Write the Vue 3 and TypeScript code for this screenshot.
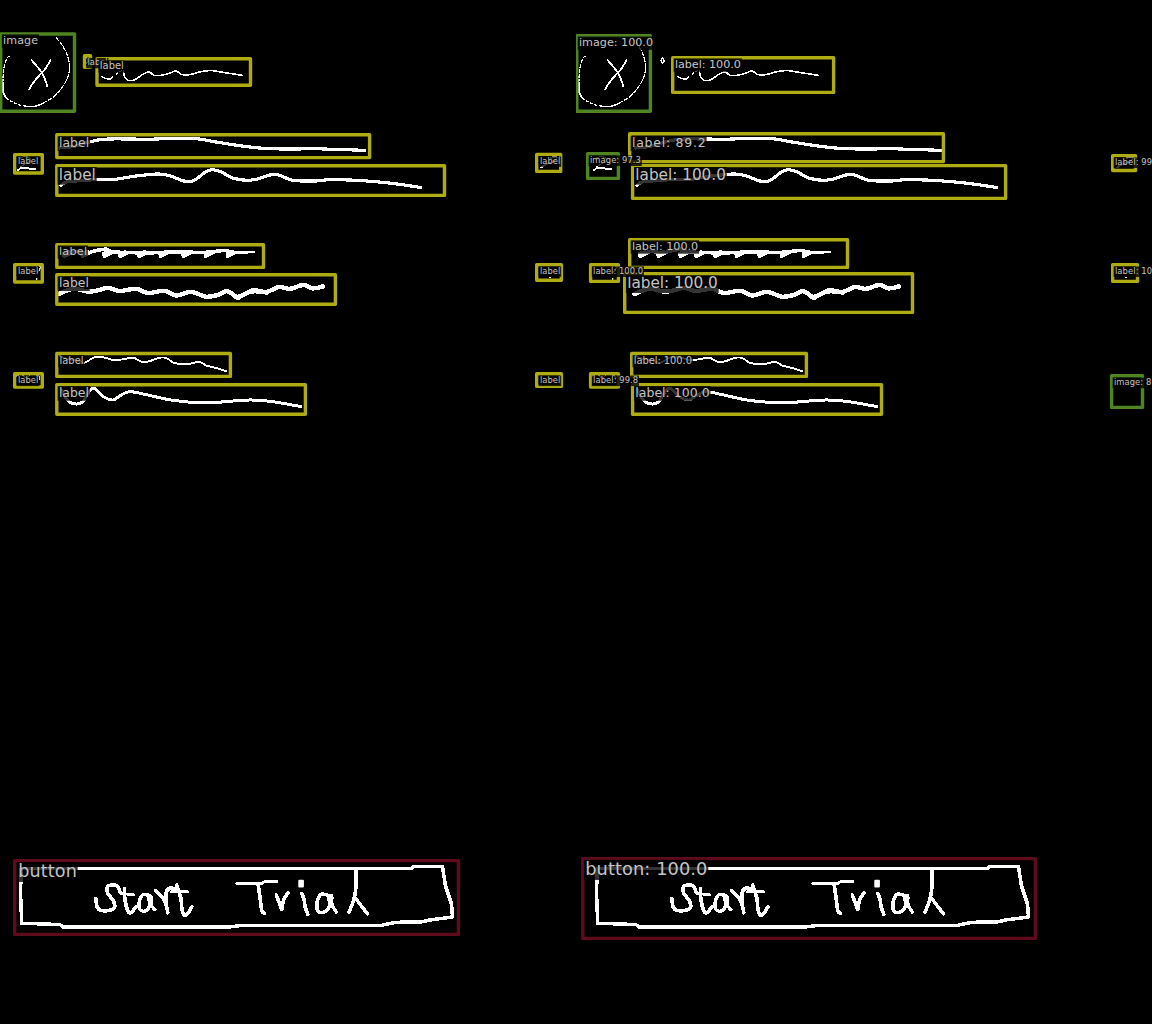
<script setup lang="ts">
type Kind = 'image' | 'label' | 'button'
type Box = [kind: Kind, x1: number, y1: number, x2: number, y2: number]
type Tag = [text: string, x: number, baseline: number, width: number, size: number]
interface Panel { name: string; origin: number; boxes: Box[]; tags: Tag[] }
interface Stroke { pts: string; w: number; straight?: boolean; dash?: string }

const strokes: Stroke[] = [
  { w: 1.1, dash: '5 0.8', pts: '56.3,37.3 61.5,43.5 67.3,54 69.8,63.3 69.3,73.5 65,84 55,96 43.5,103.3' },
  { w: 1.5, pts: '43.5,103.3 37,106 31.7,106.7 26,106.2' },
  { w: 1.1, dash: '3 1.6', pts: '26,106.2 20,105 10,100.5 6,97' },
  { w: 1.9, pts: '6,97 4,93 3.4,83' },
  { w: 1.1, dash: '4 1', pts: '3.4,83 4,70 6.7,60 8.5,56.8 10.5,56.3' },
  { w: 1.8, pts: '32.3,60.3 41.7,71.7 46.3,81.5 47.8,86.5' },
  { w: 1.8, pts: '50.7,60.3 46.5,68 41.5,73.5 33.3,83.3 29.5,89.5' },
  { w: 1.3, pts: '102.3,76.3 106,78.5 111,79 113.3,77' },
  { w: 1, dash: '3 1.5', pts: '116.2,74.5 120.7,71.3 124,70.8' },
  { w: 1.6, pts: '124,70.8 125.3,77.6 130,80.7 136.7,79 143.3,74.3 149.7,71.9 154.3,75.3 161.7,75.3 170,73.3 176.7,71 181.7,74.3 190,74.7 200,72 211.7,70.5 223.3,72.3 242.7,75.3' },
  { w: 1.3, pts: '87,57.5 85.6,60 87,63 88.6,60.5 87,57.5' },
  { w: 3.2, pts: '60,148 74,146.5 88,142.5 100,139.7 115,138.9 150,139.2 176.7,138.3 196.7,138.7 216.7,142 240,145.7 260,148 283,149 317,148.8 333,149.3 365,150.3' },
  { w: 3.2, pts: '61.5,185.5 63,184 66.7,182 98.3,179.5 116.7,179.2 133,176.5 158.3,174 170,175.7 183.3,180.7 191.7,181.7 200,176.7 206.7,171.5 213.3,169.7 221.7,172 233.3,178 246.7,180.3 257,179.2 266.7,176 275,174.3 281.7,176 293,180.3 316.7,181 326.7,179.9 350,180 376.7,181.7 400,184.3 421,187.5' },
  { w: 1.6, straight: true, pts: '18,170.5 21,168 29,168 30,169 35.7,169.2' },
  { w: 1.2, pts: '21,167 27,163 31,160 26,156.5 21,158' },
  { w: 1.8, pts: '541.5,167.5 546,164.5 555,161 557,157 551,158' },
  { w: 3.6, pts: '64,255 75,251.5 88,253 95,250.9 106.7,249.2 112,251.8 150,252.8 178,251.8 204,252.5 226,250.5 232,252.3 246,252.4' },
  { w: 2.2, pts: '240,252.7 255,252.2' },
  { w: 4.4, pts: '59,294 66.7,290.7 75,288.7 88.3,291.5 96.7,290.8 108,287.9 120,291 136.7,288.8 148.3,293 165,290.9 176.7,295.5 191.7,291.9 206.7,296.7 218,295 227.7,291.2 238.3,296.8 253.3,290.3 266.7,292 280,286.9 290,288.9 304,285 313.3,288.4 323.5,286.4' },
  { w: 2, pts: '242,295.5 255,292.5 268,293.8' },
  { w: 2, pts: '230,293 238,299 245,295' },
  { w: 1.9, pts: '60,356 68,359 77,360.5 84,363 88,361.3 93.3,358 99.3,356.8 106.7,358 115,360.3 125,359 134,357.7 141.7,361.7 148.3,361.7 160,357.8 166.7,358 175,363.1 190,363.7 200,362 206.7,365.5 216.7,368 226.7,371.3' },
  { w: 3, pts: '62,390 68.3,400.7 76.7,404 83.3,401.7 88.3,393.3 94.3,388.3 103.3,396.3 113.3,400 121.7,395 130,391.7 146.7,394.7 173.3,400.3 206.7,402.8 250,400 273.3,401.7 301,406.5' },
  { w: 1.2, pts: '17,376 22,374.5 27,378 32,374 39,376 40.5,380' },
  { w: 1.2, pts: '37,266 40,265.5 40.5,269 38,272' },
  { w: 3.5, straight: true, pts: '21.5,868.5 21.1,895 22.2,923.3 45.5,924 60.5,924.7 63.8,927 230,927 240,925.7 380,925.7 396.7,922.3 421.7,922 430,920 453,917 452,904 446,886 443,866.5 413.8,866.7 412.2,868.5 21.5,868.5' },
  { w: 3.6, pts: '96.5,898.5 97.5,906.5 101,910.3 111.7,910 115.3,906.5 113.3,900 108.3,893.3 107.5,887.5 111.7,885 116.7,885.5 119.3,888.5 120.7,892.7' },
  { w: 3.6, pts: '124.9,888.5 125.5,900 128.5,911.5 131,913 136.3,907' },
  { w: 2.9, pts: '120.7,893.3 134,894.8' },
  { w: 3.4, pts: '148.8,895 143.3,894.7 139.8,901.7 140.5,909.5 146.3,910.7 150.3,905 149.8,895.5 151.7,905 155.5,909.8' },
  { w: 3.6, pts: '156.3,890.5 159.8,894 164,898.5 167,906 168.3,912.8' },
  { w: 4, pts: '167,903 166.3,897 167.5,890.5 171.5,887.8 174.5,889.5' },
  { w: 2.9, pts: '172,891.8 188.3,891.8' },
  { w: 3.6, pts: '177,885 181.3,898 182.8,911 186,915.3 192.3,907' },
  { w: 2.7, straight: true, pts: '237.2,883.5 262.2,883.5 265.5,881.5 277,881.5' },
  { w: 3.6, pts: '258.6,884 260.6,898 262.5,911.5 265,913.3' },
  { w: 3.6, straight: true, pts: '276.8,895 282.2,909.5 284.2,899 288.7,892.8' },
  { w: 3.6, pts: '302.4,893.3 304.7,900 305.7,907 308.3,914.3' },
  { w: 3.5, pts: '327.7,895 321.5,894.5 317.7,901.7 318.5,911 325,912 330,906 330.7,895.5 332.5,905 336.8,912' },
  { w: 3.6, pts: '356.8,869 356.5,886.7 354.2,900 349.5,912.3' },
  { w: 3.5, straight: true, pts: '355.5,897.5 368,914' },
]

const teeth = [62.3, 80.7, 102.7, 118.3, 137.5, 158.8, 181.7, 204, 226]
const toothPath = (x: number) => `M${x} 252 L${x + 0.4} 257 L${x + 2} 258.4 L${x + 6} 256.4 L${x + 12} 253.5 L${x + 8} 250 Z`

/* Catmull-Rom smoothing of a point list into cubic segments */
function toPath(s: Stroke): string {
  const p = s.pts.split(' ').map(v => v.split(',').map(Number))
  if (s.straight) return 'M' + p.map(v => v.join(' ')).join(' L')
  let d = `M${p[0][0]} ${p[0][1]}`
  for (let i = 0; i < p.length - 1; i++) {
    const a = p[Math.max(0, i - 1)], b = p[i], c = p[i + 1], e = p[Math.min(p.length - 1, i + 2)]
    // handles are capped to the current segment so uneven spacing does not overshoot
    const len = Math.hypot(c[0] - b[0], c[1] - b[1]) / 3
    const handle = (dx: number, dy: number) => {
      const h = Math.hypot(dx, dy) || 1
      return [(dx / h) * len, (dy / h) * len]
    }
    const h1 = handle(c[0] - a[0], c[1] - a[1])
    const h2 = handle(e[0] - b[0], e[1] - b[1])
    d += ` C${b[0] + h1[0]} ${b[1] + h1[1]} ${c[0] - h2[0]} ${c[1] - h2[1]} ${c[0]} ${c[1]}`
  }
  return d
}
const paths = strokes.map(s => ({ d: toPath(s), w: s.w, dash: s.dash }))

const panels: Panel[] = [
  {
    name: 'truth',
    origin: 0,
    boxes: [
      ['image', 0.7, 34, 74.5, 111.3],
      ['label', 84.5, 55.7, 90.5, 67.3],
      ['label', 97, 58.8, 250.5, 85.3],
      ['label', 56.8, 134.7, 369.6, 157.6],
      ['label', 56.8, 165.7, 444.5, 195.4],
      ['label', 14.7, 154.7, 42.3, 173],
      ['label', 56.8, 244.7, 263.5, 267.4],
      ['label', 56.8, 274.7, 335.4, 304.3],
      ['label', 14.7, 264.7, 42.3, 282],
      ['label', 56.8, 353.5, 230.4, 376.4],
      ['label', 56.8, 384.7, 305.4, 414.3],
      ['label', 14.7, 373.8, 42.3, 387],
      ['label', 536.7, 154.4, 560.7, 171.4],
      ['label', 536.7, 264.7, 561.4, 280.2],
      ['label', 536.7, 373.8, 561.4, 386.4],
      ['button', 14.7, 860.6, 458.4, 934.4],
    ],
    tags: [
      ['image', 2.6, 44, 35, 11.1],
      ['label', 87, 65.3, 20, 8.2],
      ['label', 99.3, 69.2, 24, 9.9],
      ['label', 58.4, 147, 30.3, 12.4],
      ['label', 58.3, 180, 37, 15.3],
      ['label', 17.4, 163.8, 20.4, 8.3],
      ['label', 58.5, 255.2, 28, 11.2],
      ['label', 58.4, 287, 30, 12.4],
      ['label', 17.4, 273.9, 20.4, 8.3],
      ['label', 59, 364, 24, 9.9],
      ['label', 58.4, 396.8, 30, 12.4],
      ['label', 17.4, 383.1, 20.4, 8.3],
      ['label', 539.4, 163.9, 20.4, 8.3],
      ['label', 539.4, 273.9, 20.4, 8.3],
      ['label', 539.4, 383.1, 20.4, 8.3],
      ['button', 17.8, 876.7, 58.5, 17.6],
    ],
  },
  {
    name: 'detected',
    origin: 576,
    boxes: [
      ['image', 576.8, 35.7, 650.4, 111.3],
      ['label', 672.7, 57.7, 833.6, 92.4],
      ['label', 629.7, 133.7, 943.4, 161.6],
      ['label', 632.6, 165.6, 1005.6, 198.4],
      ['image', 587.6, 153.7, 618.4, 178.4],
      ['label', 629.7, 239.7, 847.5, 267.4],
      ['label', 624.7, 273.7, 912.5, 312.4],
      ['label', 590.6, 264.7, 618.4, 281.4],
      ['label', 631.7, 353.5, 806.4, 376.4],
      ['label', 632.6, 384.7, 881.5, 414.3],
      ['label', 590.6, 373.8, 618.4, 387],
      ['label', 1112.7, 155.6, 1135.5, 170.5],
      ['label', 1112.7, 264.8, 1137.5, 281.4],
      ['image', 1111.6, 375.7, 1142.5, 407.4],
      ['button', 582.8, 858.6, 1035.4, 938.4],
    ],
    tags: [
      ['image: 100.0', 578.5, 46.2, 74, 11.2],
      ['label: 100.0', 674.4, 68.1, 66, 11.2],
      ['label: 89.2', 631.4, 147, 73.8, 12.5],
      ['label: 100.0', 634.8, 180, 90.6, 15.3],
      ['image: 97.3', 589.4, 163, 51, 8.4],
      ['label: 100.0', 631.4, 250, 66.3, 11.2],
      ['label: 100.0', 626.7, 288.3, 90.6, 15.3],
      ['label: 100.0', 592.6, 274, 50, 8.4],
      ['label: 100.0', 633.3, 364, 58.2, 9.9],
      ['label: 100.0', 634.8, 396.8, 74.3, 12.5],
      ['label: 99.8', 592.6, 383.1, 45, 8.4],
      ['label: 99', 1114.4, 165, 37.2, 8.4],
      ['label: 10', 1114.4, 274, 37.2, 8.4],
      ['image: 8', 1113.4, 385.2, 37.4, 8.4],
      ['button: 100.0', 584.7, 874.7, 122.2, 17.8],
    ],
  },
]
</script>

<template>
  <main class="compare">
    <svg
      v-for="panel in panels"
      :key="panel.name"
      class="panel"
      width="576"
      height="1024"
      viewBox="0 0 576 1024"
    >
      <g class="sketch" transform="translate(-0.5 0)">
        <path v-for="(p, i) in paths" :key="i" :d="p.d" :stroke-width="p.w" :stroke-dasharray="p.dash" :class="{ dashed: p.dash }" />
        <path v-for="x in teeth" :key="'t' + x" class="fill" :d="toothPath(x)" />
        <rect class="fill" x="298.8" y="879.8" width="5.6" height="7.6" rx="1" />
        <rect class="fill" x="36.5" y="278" width="1.3" height="2" />
        <rect class="fill" x="549.5" y="277" width="2" height="1" />
      </g>
      <g :transform="`translate(${-panel.origin} 0)`">
        <rect
          v-for="([kind, x1, y1, x2, y2], i) in panel.boxes"
          :key="'b' + i"
          class="box"
          :class="kind"
          :x="x1"
          :y="y1"
          :width="x2 - x1"
          :height="y2 - y1"
        />
        <g v-for="([text, x, y, w, size], i) in panel.tags" :key="'g' + i">
          <rect class="plate" :x="x - 0.8" :y="y - size * 0.78 - 1" :width="w + 2.2" :height="size * 1.02 + 2" />
          <text class="tag" :x="x + 0.5" :y="y" :font-size="size" :textLength="w">{{ text }}</text>
        </g>
      </g>
    </svg>
  </main>
</template>

<style>
body {
  margin: 0;
  background: #000;
}
</style>

<style scoped>
.compare {
  display: flex;
  width: 1152px;
  height: 1024px;
  background: #000;
  overflow: hidden;
}
.panel {
  display: block;
  flex: none;
  overflow: hidden;
}
.sketch path {
  fill: none;
  stroke: #fff;
  stroke-linecap: round;
  stroke-linejoin: round;
  shape-rendering: crispEdges;
}
.sketch .dashed {
  stroke-linecap: butt;
}
.sketch .fill {
  fill: #fff;
  stroke: none;
}
.box {
  fill: none;
  stroke-width: 3.4;
  stroke-linejoin: round;
}
.label {
  stroke: #aeac12;
}
.image {
  stroke: #4e8520;
}
.button {
  stroke: #5e0c1b;
}
.plate {
  fill: #000;
  fill-opacity: 0.8;
}
.tag {
  fill: #c4c4c4;
  font-family: 'DejaVu Sans', sans-serif;
}
</style>
